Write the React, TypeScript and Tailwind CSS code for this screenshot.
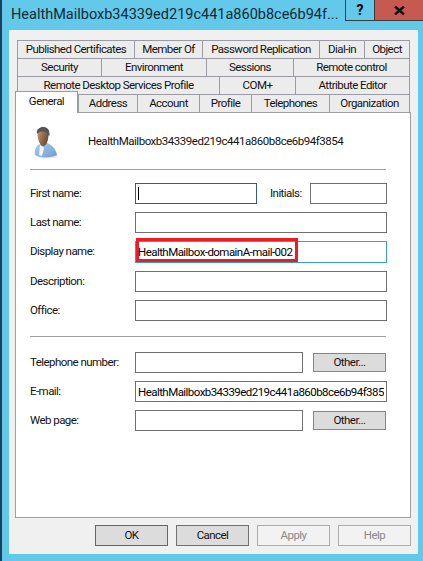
const font = "font-['Roboto','Open_Sans',sans-serif]"
const small = 'text-[11.5px] tracking-[-0.55px]'

const tabRows = [
  [
    { label: 'Published Certificates', w: 'w-[117px]' },
    { label: 'Member Of', w: 'w-[68px]' },
    { label: 'Password Replication', w: 'w-[117px]' },
    { label: 'Dial-in', w: 'w-[45px]' },
    { label: 'Object', w: 'w-[46px]' },
  ],
  [
    { label: 'Security', w: 'w-[84px]' },
    { label: 'Environment', w: 'w-[105px]' },
    { label: 'Sessions', w: 'w-[87px]' },
    { label: 'Remote control', w: 'w-[117px]' },
  ],
  [
    { label: 'Remote Desktop Services Profile', w: 'w-[202px]' },
    { label: 'COM+', w: 'w-[76px]' },
    { label: 'Attribute Editor', w: 'w-[115px]' },
  ],
]

const lastRow = [
  { label: 'Address', w: 'w-[59px]' },
  { label: 'Account', w: 'w-[62px]' },
  { label: 'Profile', w: 'w-[52px]' },
  { label: 'Telephones', w: 'w-[78px]' },
  { label: 'Organization', w: 'w-[81px]' },
]

function Tab({ label, w }: { label: string; w: string }) {
  return (
    <div className={`${w} h-[18px] flex items-center justify-center bg-[#ececec] border-l border-t border-[#9b9ba3] last:border-r ${small} text-[#111] whitespace-nowrap`}>
      {label}
    </div>
  )
}

function Field({ w = 'w-[252px]', value, className = 'border-[#707070]', h = 'h-[21px]' }: { w?: string; value?: string; className?: string; h?: string }) {
  return (
    <input
      readOnly
      value={value ?? ''}
      className={`block ${w} ${h} border ${className} bg-white px-[2px] ${small} text-black outline-none ${font}`}
    />
  )
}

function Row({ label, children, h = 'h-[21px]' }: { label: string; children: React.ReactNode; h?: string }) {
  return (
    <div className={`flex items-center ${h}`}>
      <span className={`w-[105px] ${small} text-[#111] whitespace-nowrap`}>{label}</span>
      {children}
    </div>
  )
}

function OtherButton() {
  return (
    <div className={`ml-[10px] w-[73px] h-[19px] flex items-center justify-center bg-[#dcdcdc] border border-[#858585] ${small} text-[#111]`}>
      Other...
    </div>
  )
}

function DialogButton({ label, className }: { label: string; className: string }) {
  return (
    <div className={`w-[73px] h-[21px] flex items-center justify-center border ${small} ${className}`}>
      {label}
    </div>
  )
}

function UserIcon() {
  return (
    <svg width="24" height="33" viewBox="0 0 24 33" className="shrink-0">
      <defs>
        <linearGradient id="shirt" x1="0" y1="0" x2="1" y2="1">
          <stop offset="0" stopColor="#a9cdee" />
          <stop offset="1" stopColor="#6f9fd0" />
        </linearGradient>
        <linearGradient id="skin" x1="0" y1="0" x2="1" y2="0.6">
          <stop offset="0" stopColor="#c89c70" />
          <stop offset="1" stopColor="#6b4a30" />
        </linearGradient>
      </defs>
      <ellipse cx="13" cy="30" rx="11" ry="2.5" fill="#e6e6e6" />
      <path d="M1 29 C0 24 2 20 6 18 L13 17 C18 19 22 23 23 29 C18 32 6 32.5 1 29 Z" fill="url(#shirt)" />
      <path d="M6 19 L10 22 L8 30 L5 29 Z" fill="#f6f7f9" />
      <path d="M3.5 7 C3.5 3 6 2 9 2 C12.5 2 14.5 4 14.5 8 C14.5 13 13 20 9 20 C5.5 20 3.5 12 3.5 7 Z" fill="url(#skin)" />
      <path d="M3 8 C2 3 6 1 9 1 C13 1 16 3 15.5 10 L14 9 C13.5 6.5 11 5.5 8.5 5.5 C6 5.5 4.5 6 3 8 Z" fill="#555" />
    </svg>
  )
}

export default function App() {
  return (
    <div className={`w-[423px] h-[561px] overflow-hidden flex flex-col bg-[#63c9eb] border-l-2 border-[#1f3f5f] ${font}`}>
      {/* title bar */}
      <div className="h-[30px] shrink-0 flex items-start">
        <div className="flex-1 min-w-0 pl-[9px] pt-[4px] text-[14.5px] leading-[22px] text-[#0f2a35] whitespace-nowrap overflow-hidden">
          HealthMailboxb34339ed219c441a860b8ce6b94f...
        </div>
        <div className="shrink-0 w-[29px] h-[21px] flex items-center justify-center border-l border-b border-[#3a3a3a] text-[14px] font-bold text-black">?</div>
        <div className="shrink-0 w-[49px] h-[21px] flex items-center justify-center bg-[#c75a50] border-l border-b border-[#3a3a3a]">
          <svg width="11" height="9" viewBox="0 0 11 9">
            <path d="M1 0.5 L10 8.5 M10 0.5 L1 8.5" stroke="#111" strokeWidth="2.4" />
          </svg>
        </div>
      </div>

      {/* client area */}
      <div className="ml-[7px] mr-[5px] h-[524px] bg-[#f0f0f0] pt-[10px] px-[6px] flex flex-col">
        <div className="pl-[2px]">
          {tabRows.map((row, i) => (
            <div key={i} className="flex">
              {row.map((t) => (
                <Tab key={t.label} label={t.label} w={t.w} />
              ))}
            </div>
          ))}
        </div>
        <div className="relative z-10 -mt-[3px] h-[22px] flex items-end">
          <div className={`w-[63px] h-[22px] flex items-start justify-center pt-[1px] bg-white border-l border-t border-r border-[#9b9ba3] ${small} text-[#111]`}>
            General
          </div>
          <div className="flex h-[19px]">
            {lastRow.map((t) => (
              <Tab key={t.label} label={t.label} w={t.w} />
            ))}
          </div>
        </div>

        {/* panel */}
        <div className="-mt-[1px] h-[406px] w-[396px] bg-white border border-[#a0a0a0] pl-[14px] flex flex-col">
          <div className="flex items-center h-[56px] pl-[4px] pt-[2px]">
            <UserIcon />
            <span className="ml-[30px] text-[11.5px] tracking-[-0.47px] text-[#111]">HealthMailboxb34339ed219c441a860b8ce6b94f3854</span>
          </div>
          <div className="w-[356px] h-px bg-[#a0a0a0]" />

          <div className="mt-[13px] flex flex-col gap-[8px]">
            <Row label="First name:">
              <div className="relative">
                <Field w="w-[122px]" className="border-[#2f6187]" />
                <div className="absolute left-[3px] top-[4px] w-px h-[13px] bg-black" />
              </div>
              <span className={`ml-[13px] w-[40px] ${small} text-[#111]`}>Initials:</span>
              <Field w="w-[77px]" />
            </Row>
            <Row label="Last name:">
              <Field />
            </Row>
            <Row label="Display name:" h="h-[22px]">
              <div className="relative">
                <Field value="HealthMailbox-domainA-mail-002" className="border-[#3a9bd5]" h="h-[22px]" />
                <div className="absolute left-[1px] -top-[3px] w-[162px] h-[24px] border-[3px] border-[#ed1c24]" />
              </div>
            </Row>
            <Row label="Description:">
              <Field />
            </Row>
            <Row label="Office:">
              <Field />
            </Row>
          </div>

          <div className="mt-[15px] w-[356px] h-px bg-[#a0a0a0]" />

          <div className="mt-[15px] flex flex-col gap-[8px]">
            <Row label="Telephone number:">
              <Field w="w-[168px]" />
              <OtherButton />
            </Row>
            <Row label="E-mail:">
              <Field value="HealthMailboxb34339ed219c441a860b8ce6b94f3854@domainA.local" />
            </Row>
            <Row label="Web page:">
              <Field w="w-[168px]" />
              <OtherButton />
            </Row>
          </div>
        </div>

        {/* dialog buttons */}
        <div className="mt-[7px] pl-[80px] flex gap-[8px]">
          <DialogButton label="OK" className="bg-[#dcdcdc] border-[#3f7098] text-[#111]" />
          <DialogButton label="Cancel" className="bg-[#dcdcdc] border-[#707070] text-[#111]" />
          <DialogButton label="Apply" className="bg-[#f2f2f2] border-[#adadad] text-[#8a8a8a]" />
          <DialogButton label="Help" className="bg-[#f2f2f2] border-[#adadad] text-[#8a8a8a]" />
        </div>
      </div>
    </div>
  )
}
